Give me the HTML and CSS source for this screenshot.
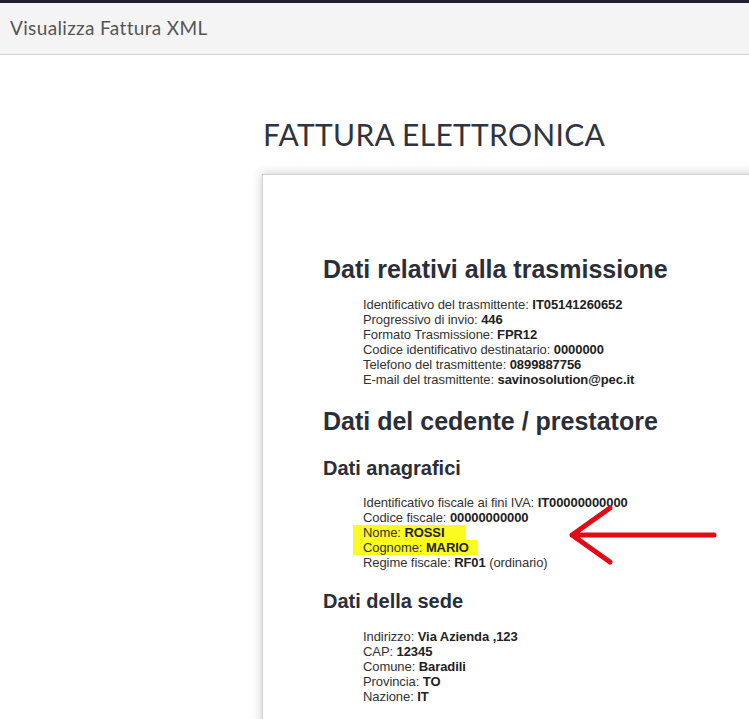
FILE: index.html
```html
<!DOCTYPE html>
<html lang="it">
<head>
<meta charset="utf-8">
<title>Visualizza Fattura XML</title>
<link rel="stylesheet" href="styles.css">
</head>
<body>
<div class="topline"></div>
<nav class="navbar"><span class="brand">Visualizza Fattura XML</span></nav>
<main class="main">
  <h1 class="page-title">FATTURA ELETTRONICA</h1>
  <section class="card">
    <h2 class="h-main tight">Dati relativi alla trasmissione</h2>
    <div class="fields gap-big">
      <div>Identificativo del trasmittente: <b>IT05141260652</b></div>
      <div>Progressivo di invio: <b>446</b></div>
      <div>Formato Trasmissione: <b>FPR12</b></div>
      <div>Codice identificativo destinatario: <b>0000000</b></div>
      <div>Telefono del trasmittente: <b>0899887756</b></div>
      <div>E-mail del trasmittente: <b>savinosolution@pec.it</b></div>
    </div>
    <h2 class="h-main wide">Dati del cedente / prestatore</h2>
    <h3 class="h-sub">Dati anagrafici</h3>
    <div class="fields gap-mid">
      <div>Identificativo fiscale ai fini IVA: <b>IT00000000000</b></div>
      <div>Codice fiscale: <b>00000000000</b></div>
      <div><span class="mark mark-a">Nome: <b>ROSSI</b></span></div>
      <div><span class="mark mark-b">Cognome: <b>MARIO</b></span></div>
      <div>Regime fiscale: <b>RF01</b> (ordinario)</div>
    </div>
    <h3 class="h-sub sede">Dati della sede</h3>
    <div class="fields">
      <div>Indirizzo: <b>Via Azienda ,123</b></div>
      <div>CAP: <b>12345</b></div>
      <div>Comune: <b>Baradili</b></div>
      <div>Provincia: <b>TO</b></div>
      <div>Nazione: <b>IT</b></div>
    </div>
  </section>
</main>
<svg class="arrow" width="160" height="70" viewBox="0 0 160 70" aria-hidden="true">
  <path d="M154 38 L12 38 M50 11 L12 38 L50 65" fill="none" stroke="#e20a17" stroke-width="5" stroke-linecap="round" stroke-linejoin="round"/>
</svg>
</body>
</html>
```
FILE: styles.css
```css
html, body {
  margin: 0;
  padding: 0;
  overflow: hidden;
  background: #ffffff;
}
body {
  position: relative;
  font-family: "Liberation Sans", Arial, sans-serif;
  color: #333333;
  width: 749px;
  height: 719px;
}
.topline {
  height: 3px;
  background: #1f2130;
}
.navbar {
  height: 51px;
  background: #f4f4f4;
  border-bottom: 1px solid #d2d2d2;
  display: flex;
  align-items: center;
  padding-left: 10px;
}
.brand {
  font-family: Lato, "Open Sans", sans-serif;
  font-size: 19px;
  color: #555555;
  letter-spacing: 0.35px;
  margin-top: -2px;
}
.main {
  padding-left: 262px;
  padding-top: 61px;
}
.page-title {
  margin: 0 0 22px 1px;
  font-family: Lato, "Open Sans", sans-serif;
  font-weight: 400;
  font-size: 30px;
  line-height: 36px;
  color: #2f3440;
  letter-spacing: 0.3px;
}
.card {
  width: 620px;
  height: 700px;
  background: #fff;
  border: 1px solid #cfcfcf;
  box-shadow: 0 0 10px rgba(0, 0, 0, 0.22);
  padding: 80px 0 0 60px;
  box-sizing: border-box;
}
.h-main {
  margin: 0;
  font-size: 25px;
  line-height: 28px;
  font-weight: bold;
  color: #2a2e39;
}
.h-main.tight { margin-bottom: 14px; }
.h-main.wide { margin-bottom: 21px; }
.h-sub {
  margin: 0 0 15px 0;
  font-size: 20px;
  line-height: 24px;
  font-weight: bold;
  color: #2a2e39;
}
.h-sub.sede { margin-bottom: 16px; }
.fields {
  margin-left: 40px;
  font-size: 13px;
  line-height: 15px;
  color: #333;
  letter-spacing: -0.08px;
}
.fields b { color: #222; }
.fields.gap-big { margin-bottom: 20px; }
.fields.gap-mid { margin-bottom: 19px; }
.mark {
  background: #fbfb22;
  padding-left: 10px;
  margin-left: -10px;
}
.mark-a { padding-right: 22px; }
.mark-b { padding-right: 9px; }
.arrow {
  position: absolute;
  left: 560px;
  top: 497px;
}
```
